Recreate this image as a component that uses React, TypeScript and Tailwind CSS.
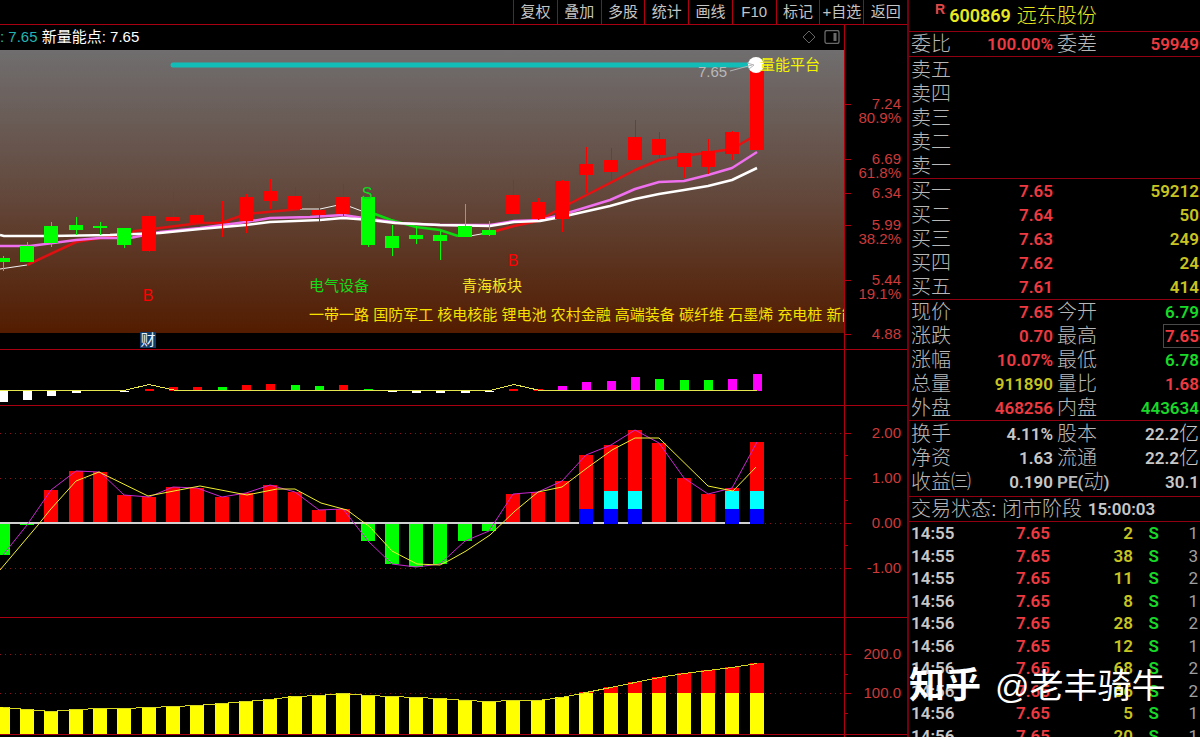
import type { ReactNode } from "react";

const RED = "#ff0000";
const GREEN = "#00ff00";
const MAGENTA = "#ff00ff";
const WHITE = "#ffffff";
const YELLOW = "#ffff00";

type Point = [number, number];

const center = (i: number) => 2.7 + 24.32 * i;
const toPoints = (pts: Point[]) => pts.map((p) => p.join(",")).join(" ");

// Candle: open/close top, bottom, wick top, wick bottom, rising
const candles: [number, number, number, number, boolean][] = [
  [258, 262, 256, 271, false],
  [246, 262, 242, 262, false],
  [226, 243, 222, 247, false],
  [225, 230, 217, 235, false],
  [226, 228, 222, 235, false],
  [228, 245, 228, 248, false],
  [216, 251, 210, 252, true],
  [217, 221, 192, 221, true],
  [215, 223, 203, 223, true],
  [222, 223, 201, 237, true],
  [197, 221, 194, 233, true],
  [191, 201, 179, 209, true],
  [196, 209, 187, 211, true],
  [210, 215, 193, 223, true],
  [197, 214, 184, 216, true],
  [197, 245, 197, 247, false],
  [236, 248, 225, 256, false],
  [235, 239, 226, 244, false],
  [235, 241, 231, 260, false],
  [226, 237, 204, 237, false],
  [230, 235, 221, 236, false],
  [195, 214, 180, 214, true],
  [202, 219, 198, 220, true],
  [181, 219, 180, 232, true],
  [164, 175, 147, 193, true],
  [160, 172, 148, 180, true],
  [137, 160, 120, 160, true],
  [139, 155, 132, 158, true],
  [153, 167, 153, 178, true],
  [151, 167, 139, 174, true],
  [132, 154, 131, 160, true],
  [70, 150, 70, 150, true],
];

const slowLine: Point[] = [
  [0, 235], [4, 236], [51, 236], [110, 235], [135, 234], [160, 233], [200, 229], [246, 225], [270, 222], [320, 220],
  [343, 218], [370, 220], [395, 223], [440, 225], [490, 226], [514, 222], [540, 221], [561, 217], [610, 206], [635, 199],
  [659, 194], [684, 190], [708, 186], [732, 180], [757, 168],
];
const middleLine: Point[] = [
  [0, 246], [30, 246], [76, 240], [100, 238], [130, 238], [160, 232], [200, 228], [246, 222], [270, 218], [310, 217],
  [343, 215], [370, 219], [400, 223], [440, 225], [490, 225], [514, 221], [540, 220], [561, 215], [610, 200], [635, 189],
  [659, 182], [684, 181], [708, 175], [732, 168], [757, 152],
];
const fastRedA: Point[] = [[27, 265], [76, 242], [100, 238], [124, 236], [135, 231], [160, 228], [200, 223], [221, 223], [246, 214], [300, 209]];
const fastRedB: Point[] = [[492, 232], [514, 226], [538, 221], [561, 208], [610, 183], [635, 170], [659, 160], [684, 156], [732, 149], [756, 135]];
const fastGreen: Point[] = [[367, 211], [391, 220], [416, 227], [440, 230], [458, 236]];
const thinWhite: Point[][] = [
  [[0, 269], [27, 265]],
  [[300, 209], [320, 209], [343, 204], [367, 213]],
  [[458, 236], [470, 236], [492, 232]],
];

// Momentum pane: edge opposite to the 390 baseline, colour
const impulse: [number, string][] = [
  [402, WHITE], [400, WHITE], [396, WHITE], [393, WHITE], [390, WHITE], [392, WHITE], [389, RED], [387, RED],
  [387, RED], [387, GREEN], [385, RED], [384, RED], [385, GREEN], [386, GREEN], [385, RED], [389, GREEN],
  [392, WHITE], [393, WHITE], [393, WHITE], [393, WHITE], [392, WHITE], [389, RED], [389, RED], [386, MAGENTA],
  [382, MAGENTA], [381, MAGENTA], [377, MAGENTA], [379, GREEN], [380, GREEN], [380, GREEN], [379, MAGENTA], [374, MAGENTA],
];
const impulseLine: Point[] = [
  [0, 390], [124, 390], [149, 384], [176, 390], [490, 390], [514, 384], [540, 390], [757, 390],
];

const swing = [
  555, 525, 490, 471, 472, 495, 497, 487, 488, 497, 493, 485, 492, 510, 509, 541,
  564, 567, 564, 541, 531, 494, 492, 481, 455, 445, 430, 443, 478, 494, 488, 442,
];
const swingLine: Point[] = [
  [0, 570], [38, 525], [50, 510], [76, 481], [99, 472], [148, 496], [200, 486], [247, 495], [277, 489], [295, 489],
  [321, 503], [347, 510], [370, 527], [392, 551], [417, 564], [440, 565], [450, 560], [466, 551], [490, 535], [515, 511],
  [538, 492], [562, 487], [587, 468], [612, 450], [635, 438], [659, 438], [708, 486], [733, 491], [756, 467],
];
const cyanBars = [25, 26, 30, 31];
const blueBars = [24, 25, 26, 30, 31];

const energy = [
  707, 709, 711, 709, 708, 708, 707, 706, 705, 703, 701, 699, 696, 695, 693, 695,
  696, 697, 698, 700, 701, 700, 700, 697, 692, 687, 682, 677, 673, 670, 667, 663,
];

function Pane({ top, height, children, axis }: { top: number; height: string; children: ReactNode; axis: ReactNode }) {
  return (
    <div className={`flex shrink-0 border-b border-[#a80010] ${height}`}>
      <svg className="h-full min-w-0 flex-1 overflow-hidden" shapeRendering="crispEdges">
        <g transform={`translate(0,${-top})`}>{children}</g>
      </svg>
      <Axis top={top}>{axis}</Axis>
    </div>
  );
}

function Axis({ top, children }: { top: number; children: ReactNode }) {
  return (
    <div className="w-[63px] shrink-0 border-l border-[#b00010]">
      <svg className="h-full w-full">
        <g transform={`translate(0,${-top})`}>{children}</g>
      </svg>
    </div>
  );
}

function Mark({ y, label, sub, at }: { y: number; label: string; sub?: string; at?: number }) {
  return (
    <g fill="#cc3a3a" fontSize="15" textAnchor="end">
      <rect x="0" y={y} width="6" height="1" fill="#b00010" />
      <text x="56" y={(at ?? y) + 5}>{label}</text>
      {sub && <text x="56" y={(at ?? y) + 19}>{sub}</text>}
    </g>
  );
}

function MinorTicks({ ys }: { ys: number[] }) {
  return (
    <>
      {ys.map((y) => (
        <rect key={y} x="0" y={y} width="3" height="1" fill="#b00010" />
      ))}
    </>
  );
}

function GridLines({ ys }: { ys: number[] }) {
  return (
    <>
      {ys.map((y) => (
        <rect key={y} x="0" y={y} width="100%" height="1" fill="url(#dots)" />
      ))}
    </>
  );
}

function PricePlot() {
  return (
    <svg className="min-h-0 w-full flex-1 overflow-hidden">
      <defs>
        <linearGradient id="sky" x1="0" y1="0" x2="0" y2="1">
          <stop offset="0" stopColor="#706e6f" />
          <stop offset="0.5" stopColor="#63493d" />
          <stop offset="1" stopColor="#531c00" />
        </linearGradient>
      </defs>
      <rect x="0" y="0" width="100%" height="283" fill="url(#sky)" />
      <g transform="translate(0,-50)">
        <line x1="173" y1="65" x2="757" y2="65" stroke="#12bdb8" strokeWidth="5" strokeLinecap="round" />
        <g fill="none" strokeLinejoin="round">
          {thinWhite.map((l, i) => (
            <polyline key={i} points={toPoints(l)} stroke="#f2f2f2" strokeWidth="1" />
          ))}
          <polyline points={toPoints(fastRedA)} stroke="#e01010" strokeWidth="2.5" />
          <polyline points={toPoints(fastRedB)} stroke="#e81010" strokeWidth="2.5" />
          <polyline points={toPoints(fastGreen)} stroke="#10d810" strokeWidth="2.5" />
          <polyline points={toPoints(middleLine)} stroke="#ee70ee" strokeWidth="2.5" />
          <polyline points={toPoints(slowLine)} stroke="#ffffff" strokeWidth="2.5" />
        </g>
        <g shapeRendering="crispEdges">
          {candles.map(([t, b, wt, wb, up], i) => {
            const x = Math.round(center(i));
            const fill = up ? RED : GREEN;
            return (
              <g key={i} fill={fill}>
                <rect x={x} y={wt} width="1" height={wb - wt} />
                <rect x={x - 7} y={t} width="14" height={b - t} />
              </g>
            );
          })}
        </g>
        <circle cx="756" cy="65" r="8" fill="#ffffff" />
        <path d="M730 71 L752 65 M747 63 L754 65 L749 69" fill="none" stroke="#b4b4b4" strokeWidth="1" />
        <g fontSize="15">
          <text x="698" y="77" fill="#b9b9b9">7.65</text>
          <text x="760" y="70" fill="#f4f400">量能平台</text>
          <text x="309" y="291" fill="#18d818">电气设备</text>
          <text x="462" y="291" fill="#f8e820">青海板块</text>
          <text x="309" y="320" fill="#f8e000">
            一带一路 国防军工 核电核能 锂电池 农村金融 高端装备 碳纤维 石墨烯 充电桩 新能
          </text>
        </g>
        <g fontSize="16" textAnchor="middle">
          <text x="148" y="301" fill="#ff0000">B</text>
          <text x="513" y="266" fill="#ff0000">B</text>
          <text x="367" y="199" fill="#10d820">S</text>
        </g>
        <rect x="140" y="332" width="16" height="16" fill="#123a68" />
        <text x="148" y="345" fontSize="15" textAnchor="middle" fill="#e4f0ff">财</text>
      </g>
    </svg>
  );
}

function Charts() {
  return (
    <>
      <div className="flex h-[325px] shrink-0 border-b border-[#a80010]">
        <div className="flex min-w-0 flex-1 flex-col">
          <div className="flex h-[25px] shrink-0 items-center pb-px text-[15px] whitespace-pre">
            <span className="text-[#22b4b0]">: 7.65 </span>
            <span className="text-white">新量能点: 7.65</span>
            <span className="ml-auto flex items-center gap-2 pr-1">
              <svg width="14" height="14" viewBox="0 0 14 14" fill="none" stroke="#646464">
                <path d="M7 1 L13 7 L7 13 L1 7 Z" />
              </svg>
              <svg width="16" height="14" viewBox="0 0 16 14" fill="none" stroke="#6a6a6a">
                <rect x="1" y="0.5" width="14" height="13" rx="2" strokeWidth="1.3" />
                <rect x="9.5" y="3" width="3" height="8" fill="#6a6a6a" stroke="none" />
              </svg>
            </span>
          </div>
          <PricePlot />
        </div>
        <Axis top={25}>
          <Mark y={104} label="7.24" sub="80.9%" />
          <Mark y={159} label="6.69" sub="61.8%" />
          <Mark y={193} label="6.34" />
          <Mark y={225} label="5.99" sub="38.2%" />
          <Mark y={280} label="5.44" sub="19.1%" />
          <Mark y={334} label="4.88" />
        </Axis>
      </div>

      <Pane top={350} height="h-[56px]" axis={null}>
        <defs>
          <pattern id="dots" width="5" height="1" patternUnits="userSpaceOnUse">
            <rect width="1" height="1" fill="#901018" />
          </pattern>
        </defs>
        {impulse.map(([edge, fill], i) => {
          const x = Math.round(center(i)) - 4;
          return <rect key={i} x={x} y={Math.min(edge, 391)} width="9" height={Math.abs(edge - 391)} fill={fill} />;
        })}
        <polyline points={toPoints(impulseLine)} transform="translate(0,0.5)" fill="none" stroke="#e6e650" strokeWidth="1" />
      </Pane>

      <Pane
        top={406}
        height="h-[212px]"
        axis={
          <>
            <MinorTicks ys={[455, 500, 545]} />
            <Mark y={433} label="2.00" />
            <Mark y={478} label="1.00" />
            <Mark y={523} label="0.00" />
            <Mark y={568} label="-1.00" />
          </>
        }
      >
        <GridLines ys={[433, 478, 523, 568]} />
        <rect x="0" y="522" width="757" height="2" fill="#d0d0d0" />
        {swing.map((v, i) => {
          const x = Math.round(center(i)) - 7;
          return v < 523 ? (
            <rect key={i} x={x} y={v} width="14" height={522 - v} fill={RED} />
          ) : (
            <rect key={i} x={x} y="524" width="14" height={Math.max(v - 524, 1)} fill={GREEN} />
          );
        })}
        {cyanBars.map((i) => (
          <rect key={i} x={Math.round(center(i)) - 7} y="491" width="14" height="18" fill="#00ffff" />
        ))}
        {blueBars.map((i) => (
          <rect key={i} x={Math.round(center(i)) - 7} y="509" width="14" height="15" fill="#0000ff" />
        ))}
        <g fill="none" strokeWidth="1" shapeRendering="auto">
          <polyline points={toPoints(swing.map((v, i): Point => [Math.round(center(i)), v]))} stroke="#c828d0" />
          <polyline points={toPoints(swingLine)} stroke="#f0f030" />
        </g>
      </Pane>

      <Pane
        top={618}
        height="h-[117px]"
        axis={
          <>
            <MinorTicks ys={[674, 713]} />
            <Mark y={654} label="200.0" />
            <Mark y={693} label="100.0" />
          </>
        }
      >
        <GridLines ys={[654, 693]} />
        {energy.map((v, i) => {
          const x = Math.round(center(i)) - 7;
          return (
            <g key={i}>
              <rect x={x} y={v} width="14" height={734 - v} fill={v < 693 ? RED : YELLOW} />
              {v < 693 && <rect x={x} y="693" width="14" height="41" fill={YELLOW} />}
            </g>
          );
        })}
        <polyline
          points={toPoints(energy.map((v, i): Point => [Math.round(center(i)), v + 0.5]))}
          fill="none"
          stroke="#d8d820"
          strokeWidth="1"
        />
      </Pane>
      <div className="flex flex-1">
        <div className="flex-1" />
        <div className="w-[63px] border-l border-[#b00010]" />
      </div>
    </>
  );
}

const menu = ["复权", "叠加", "多股", "统计", "画线", "F10", "标记", "+自选", "返回"];

function Toolbar() {
  return (
    <nav className="flex h-[25px] shrink-0 justify-end border-b border-[#a80010]">
      <div className="flex w-[394px]">
        {menu.map((m) => (
          <button
            key={m}
            type="button"
            className="flex min-w-0 flex-1 items-center justify-center border-l border-[#b00010] text-[15px] whitespace-nowrap text-[#c4c4c4]"
          >
            {m}
          </button>
        ))}
      </div>
    </nav>
  );
}

const R = "text-[#ee3a40]";
const G = "text-[#18d828]";
const Y = "text-[#c8c420]";
const W = "text-[#c8c8c8]";

const NUM = "font-['Roboto','Noto_Sans_CJK_SC',sans-serif] text-[17px] leading-6 font-semibold";

const asks = ["卖五", "卖四", "卖三", "卖二", "卖一"];
const bids: [string, string, string][] = [
  ["买一", "7.65", "59212"],
  ["买二", "7.64", "50"],
  ["买三", "7.63", "249"],
  ["买四", "7.62", "24"],
  ["买五", "7.61", "414"],
];

type Stat = { a: string; av: string; ac: string; b: ReactNode; bv: ReactNode; bc: string; boxed?: boolean };

const ratio: Stat[] = [{ a: "委比", av: "100.00%", ac: R, b: "委差", bv: "59949", bc: R }];
const prices: Stat[] = [
  { a: "现价", av: "7.65", ac: R, b: "今开", bv: "6.79", bc: G },
  { a: "涨跌", av: "0.70", ac: R, b: "最高", bv: "7.65", bc: R, boxed: true },
  { a: "涨幅", av: "10.07%", ac: R, b: "最低", bv: "6.78", bc: G },
  { a: "总量", av: "911890", ac: Y, b: "量比", bv: "1.68", bc: R },
  { a: "外盘", av: "468256", ac: R, b: "内盘", bv: "443634", bc: G },
];
const yi = (n: string) => (
  <span className="flex h-6 items-center justify-end">
    {n}
    <span className="text-[20px] leading-6 font-light">亿</span>
  </span>
);
const fundamentals: Stat[] = [
  { a: "换手", av: "4.11%", ac: W, b: "股本", bv: yi("22.2"), bc: W },
  { a: "净资", av: "1.63", ac: W, b: "流通", bv: yi("22.2"), bc: W },
  {
    a: "收益㈢",
    av: "0.190",
    ac: W,
    b: (
      <span className={`flex h-6 items-center ${NUM}`}>
        PE(<span className="text-[20px] leading-6 font-light">动</span>)
      </span>
    ),
    bv: "30.1",
    bc: W,
  },
];

function StatRows({ rows }: { rows: Stat[] }) {
  return (
    <table className="w-full table-fixed border-collapse">
      <colgroup>
        <col className="w-[63px]" />
        <col className="w-[79px]" />
        <col className="w-[62px]" />
        <col />
      </colgroup>
      <tbody>
        {rows.map((r) => (
          <tr key={r.a} className="h-6 whitespace-nowrap">
            <th className="p-0 text-left text-[20px] leading-6 font-light text-[#b8b8b8]">{r.a}</th>
            <td className={`p-0 text-right ${NUM} ${r.ac}`}>{r.av}</td>
            <th className="p-0 pl-1 text-left text-[20px] leading-6 font-light text-[#b8b8b8]">{r.b}</th>
            <td className={`p-0 text-right ${NUM} ${r.bc}`}>
              {r.boxed ? (
                <span className="ml-auto flex h-6 w-[37px] items-center justify-end border border-r-0 border-[#4a4a4a] pr-px">
                  {r.bv}
                </span>
              ) : (
                <span className="block pr-px">{r.bv}</span>
              )}
            </td>
          </tr>
        ))}
      </tbody>
    </table>
  );
}

const ticks: [string, string, string][] = [
  ["14:55", "2", "1"],
  ["14:55", "38", "3"],
  ["14:55", "11", "2"],
  ["14:56", "8", "1"],
  ["14:56", "28", "2"],
  ["14:56", "12", "1"],
  ["14:56", "68", "2"],
  ["14:56", "66", "2"],
  ["14:56", "5", "1"],
  ["14:56", "20", "1"],
];

function QuotePanel() {
  const section = "shrink-0 border-b border-[#900010] pl-0.5";
  return (
    <aside className="relative flex w-[293px] shrink-0 flex-col border-l-2 border-[#700010]">
      <header className={`${section} flex h-8 items-center`}>
        <sup className="ml-6 text-[14px] font-bold text-[#e04848]">R</sup>
        <h1 className="ml-1 flex items-center gap-1.5 text-[#e8e820]">
          <span className="font-['Roboto',sans-serif] text-[18px] font-semibold">600869</span>
          <span className="text-[20px] font-light">远东股份</span>
        </h1>
      </header>
      <div className={section}>
        <StatRows rows={ratio} />
      </div>
      <div className={`${section} pt-px`}>
        <table className="w-full">
          <tbody>
            {asks.map((a) => (
              <tr key={a} className="h-6">
                <th className="p-0 text-left text-[20px] leading-6 font-light text-[#b8b8b8]">{a}</th>
              </tr>
            ))}
          </tbody>
        </table>
      </div>
      <div className={section}>
        <table className="w-full table-fixed">
          <tbody>
            {bids.map(([l, p, v]) => (
              <tr key={l} className="h-6">
                <th className="w-[63px] p-0 text-left text-[20px] leading-6 font-light text-[#b8b8b8]">{l}</th>
                <td className={`w-[79px] p-0 text-right ${NUM} ${R}`}>{p}</td>
                <td className={`p-0 pr-px text-right ${NUM} ${Y}`}>{v}</td>
              </tr>
            ))}
          </tbody>
        </table>
      </div>
      <div className={section}>
        <StatRows rows={prices} />
      </div>
      <div className={`${section} pt-px pb-0.5`}>
        <StatRows rows={fundamentals} />
      </div>
      <p className={`${section} flex h-[25px] items-center text-[20px] font-light whitespace-pre text-[#b8b8b8]`}>
        交易状态: 闭市阶段 <span className={`${NUM} ${W}`}>15:00:03</span>
      </p>
      <div className="min-h-0 flex-1 overflow-hidden pl-0.5">
        <table className="h-[225px] w-full table-fixed font-['Roboto',sans-serif] text-[17px] leading-[22px] font-semibold">
          <tbody>
            {ticks.map(([t, v, n], i) => (
              <tr key={i}>
                <td className={`w-[60px] p-0 ${W}`}>{t}</td>
                <td className={`w-[79px] p-0 text-right ${R}`}>7.65</td>
                <td className={`w-[83px] p-0 text-right ${Y}`}>{v}</td>
                <td className={`w-[26px] p-0 text-right ${G}`}>S</td>
                <td className="p-0 pr-0.5 text-right font-normal text-[#a0a0a0]">{n}</td>
              </tr>
            ))}
          </tbody>
        </table>
      </div>
      <div className="absolute top-[661px] left-0 flex items-center gap-3.5 text-white">
        <span className="text-[36px] leading-[50px] font-bold">知乎</span>
        <span className="text-[34px] leading-[50px]">@老丰骑牛</span>
      </div>
    </aside>
  );
}

export default function App() {
  return (
    <div className="flex h-screen overflow-hidden bg-black font-['Liberation_Sans','Noto_Sans_CJK_SC',sans-serif]">
      <main className="flex min-w-0 flex-1 flex-col">
        <Toolbar />
        <Charts />
      </main>
      <QuotePanel />
    </div>
  );
}
